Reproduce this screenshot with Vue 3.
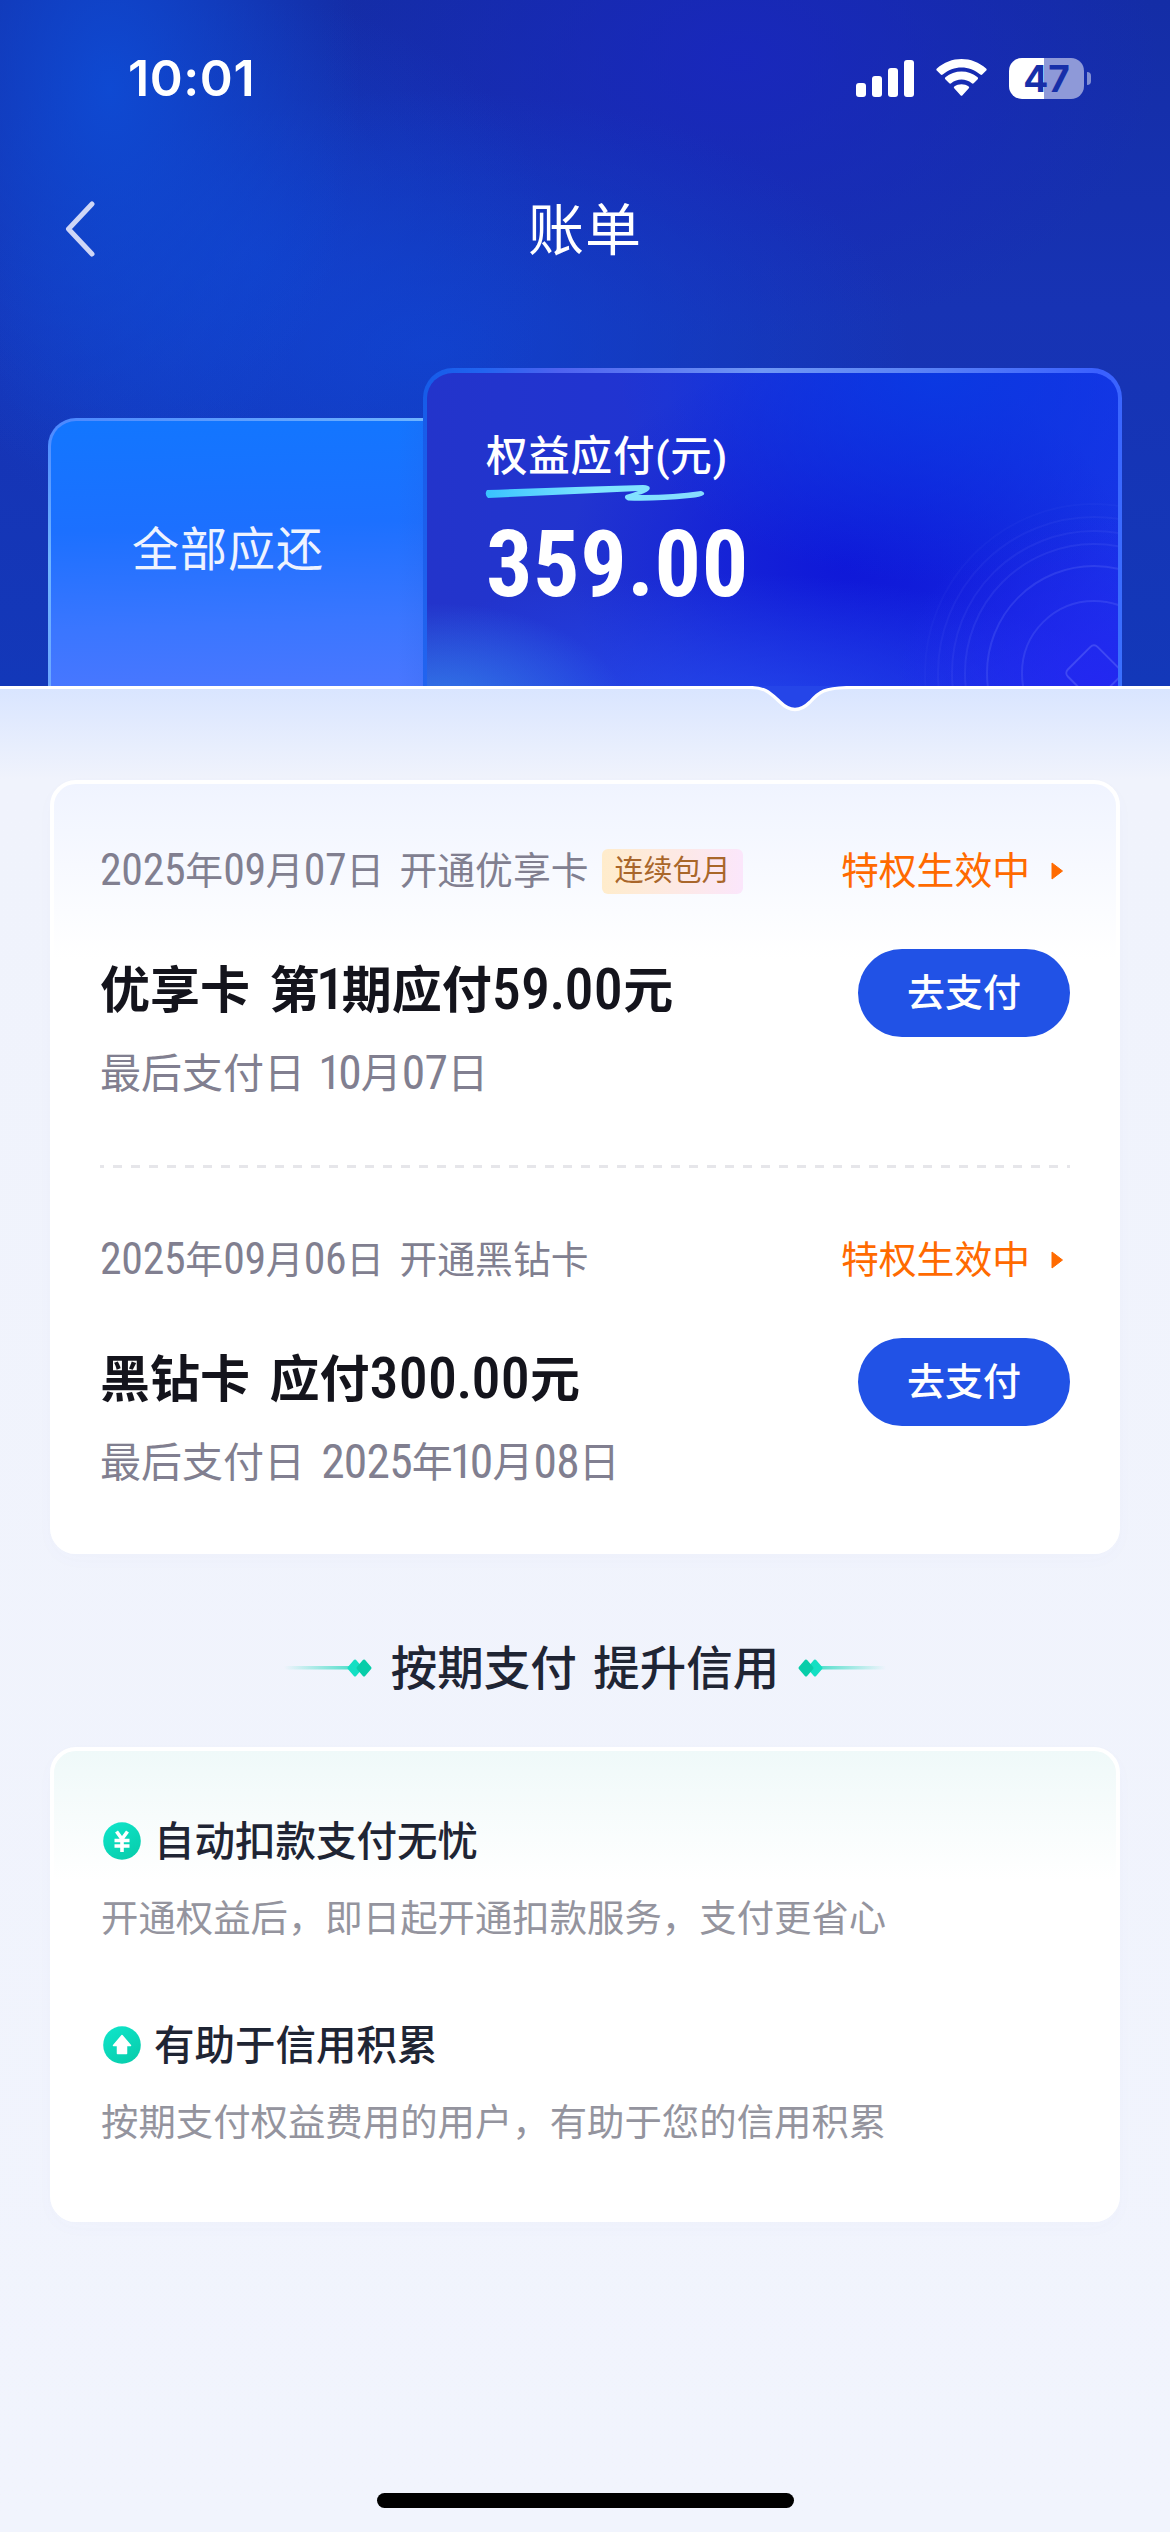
<script setup>
const bills = [
  {
    opened: '2025年09月07日 开通优享卡',
    tag: '连续包月',
    status: '特权生效中',
    title: '优享卡 第1期应付59.00元',
    due: '最后支付日 10月07日',
  },
  {
    opened: '2025年09月06日 开通黑钻卡',
    tag: '',
    status: '特权生效中',
    title: '黑钻卡 应付300.00元',
    due: '最后支付日 2025年10月08日',
  },
]

const benefits = [
  { icon: 'yuan', title: '自动扣款支付无忧', desc: '开通权益后，即日起开通扣款服务，支付更省心' },
  { icon: 'up', title: '有助于信用积累', desc: '按期支付权益费用的用户，有助于您的信用积累' },
]

// Digits are set in a narrower face than the surrounding Chinese text;
// "1" and "." get tighter side bearings so the figures look proportional.
const split = (text) =>
  text
    .split(/(1|\.|[02-9]+)/)
    .filter(Boolean)
    .map((t) => ({ t, cls: { num: /^[\d.]+$/.test(t), one: t === '1', dot: t === '.' } }))
</script>

<template>
  <div class="page">
    <header class="header">
      <div class="status-bar">
        <span class="time">10:01</span>
        <div class="indicators">
          <svg class="signal" width="58" height="37" viewBox="0 0 58 37" fill="#fff">
            <rect x="0" y="23" width="10" height="14" rx="3" />
            <rect x="16" y="16" width="10" height="21" rx="3" />
            <rect x="32" y="8" width="10" height="29" rx="3" />
            <rect x="48" y="0" width="10" height="37" rx="3" />
          </svg>
          <svg class="wifi" width="51" height="38" viewBox="0 0 51 38" fill="#fff">
            <path d="M.8 11.6Q-.2 10.6.9 9.6C14.800-3.200 36.200-3.200 50.100 9.600Q51.200 10.600 50.200 11.600L46.200 15.600Q45.300 16.500 44.300 15.600C33.500 6.200 17.500 6.200 6.700 15.600Q5.700 16.500 4.800 15.600Z" />
            <path d="M9.300 20.200Q8.400 19.300 9.400 18.300C18.500 10.500 32.500 10.500 41.600 18.300Q42.600 19.300 41.700 20.200L37.700 24.200Q36.800 25.100 35.800 24.200C29.800 19.400 21.200 19.400 15.200 24.200Q14.200 25.100 13.300 24.200Z" />
            <path d="M18.200 29.200Q17.300 28.200 18.300 27.400C22.500 24.400 28.500 24.400 32.700 27.400Q33.700 28.200 32.800 29.200L26.500 36.200Q25.500 37.200 24.500 36.200Z" />
          </svg>
          <div class="battery">
            <div class="cell">47</div>
            <div class="nub"></div>
          </div>
        </div>
      </div>

      <nav class="nav">
        <svg class="back" width="32" height="56" viewBox="0 0 32 56" fill="none">
          <path d="M29 3L5.500 28L29 53" stroke="#cfd6f6" stroke-width="5" stroke-linecap="round" stroke-linejoin="round" />
        </svg>
        <h1>账单</h1>
      </nav>

      <div class="tabs">
        <div class="tab tab-all">全部应还</div>
        <div class="tab tab-rights">
          <svg class="rings" width="200" height="200" viewBox="0 0 200 200" fill="none" stroke="#7f8cff" stroke-width="2">
            <circle cx="176" cy="187" r="72" opacity=".2" />
            <circle cx="176" cy="187" r="107" opacity=".2" />
            <circle cx="176" cy="187" r="129" opacity=".13" />
            <circle cx="176" cy="187" r="142" opacity=".1" />
            <circle cx="176" cy="187" r="156" opacity=".08" />
            <circle cx="176" cy="187" r="169" opacity=".05" />
            <rect x="155" y="166" width="42" height="42" rx="5" transform="rotate(45 176 187)" opacity=".32" />
          </svg>
          <div class="label">权益应付(元)</div>
          <svg class="underline" width="220" height="18" viewBox="0 0 220 18">
            <defs>
              <linearGradient id="stroke" x1="0" x2="1" y1="0" y2="0">
                <stop offset="0" stop-color="#38c3ff" />
                <stop offset=".5" stop-color="#80e6ff" />
                <stop offset="1" stop-color="#86dcff" />
              </linearGradient>
            </defs>
            <path d="M2 6Q80 3 158 1Q167 1.500 164 6Q160 9.500 153 11Q185 11.500 216 7Q220 8 219 10.500Q216 13 205 14Q170 17.500 143 16.500Q138 14 141 11Q148 9 153 7Q80 10.500 3 14Q-1 10 2 6Z" fill="url(#stroke)" />
          </svg>
          <div class="amount">359.00</div>
        </div>
      </div>
    </header>

    <main class="panel">
      <svg class="notch" width="104" height="28" viewBox="0 0 104 28">
        <path d="M0 -1V1.500C18 1.500 22 8 31 16Q46 31 61 16C70 6 74 1.500 104 1.500V-1Z" fill="#2545e8" />
        <path d="M0 1.500C18 1.500 22 8 31 16Q46 31 61 16C70 6 74 1.500 104 1.500" fill="none" stroke="#fff" stroke-width="3.200" />
      </svg>

      <section class="card bills">
        <article v-for="bill in bills" :key="bill.opened" class="bill">
          <div class="bill-top">
            <span class="opened"><span v-for="(s, i) in split(bill.opened)" :key="i" :class="s.cls">{{ s.t }}</span></span>
            <span v-if="bill.tag" class="tag">{{ bill.tag }}</span>
            <span class="state">
              {{ bill.status }}
              <svg width="12" height="18" viewBox="0 0 12 18"><path d="M1 1L11.500 9L1 17Z" fill="#ff6a00" stroke="#ff6a00" stroke-linejoin="round" /></svg>
            </span>
          </div>
          <div class="bill-body">
            <div class="info">
              <div class="title"><span v-for="(s, i) in split(bill.title)" :key="i" :class="s.cls">{{ s.t }}</span></div>
              <div class="due"><span v-for="(s, i) in split(bill.due)" :key="i" :class="s.cls">{{ s.t }}</span></div>
            </div>
            <button class="pay">去支付</button>
          </div>
        </article>
      </section>

      <div class="heading">
        <svg width="88" height="20" viewBox="0 0 88 20">
          <defs>
            <linearGradient id="fade" x1="0" x2="1" y1="0" y2="0">
              <stop offset="0" stop-color="#12d6b8" stop-opacity="0" />
              <stop offset="1" stop-color="#12d6b8" stop-opacity=".7" />
            </linearGradient>
          </defs>
          <rect x="0" y="8" width="66" height="3.500" fill="url(#fade)" />
          <path d="M71 3L77 10L71 17L65 10Z" fill="#14dfc3" stroke="#14dfc3" stroke-width="3" stroke-linejoin="round" />
          <path d="M80 3L86 10L80 17L74 10Z" fill="#08cda9" stroke="#08cda9" stroke-width="3" stroke-linejoin="round" />
        </svg>
        <h2>按期支付 提升信用</h2>
        <svg class="flip" width="88" height="20" viewBox="0 0 88 20">
          <rect x="0" y="8" width="66" height="3.500" fill="url(#fade)" />
          <path d="M71 3L77 10L71 17L65 10Z" fill="#14dfc3" stroke="#14dfc3" stroke-width="3" stroke-linejoin="round" />
          <path d="M80 3L86 10L80 17L74 10Z" fill="#08cda9" stroke="#08cda9" stroke-width="3" stroke-linejoin="round" />
        </svg>
      </div>

      <section class="card benefits">
        <article v-for="item in benefits" :key="item.icon" class="benefit">
          <div class="benefit-title">
            <svg width="38" height="38" viewBox="0 0 38 38">
              <defs>
                <linearGradient id="mint" x1="0" x2=".6" y1="0" y2="1">
                  <stop offset="0" stop-color="#0fe6cb" />
                  <stop offset="1" stop-color="#08cfae" />
                </linearGradient>
              </defs>
              <circle cx="19" cy="19" r="18.800" fill="url(#mint)" />
              <path v-if="item.icon === 'yuan'" d="M13.500 9.500L19 17L24.500 9.500M11.500 18.500H26.500M11.500 24H26.500M19 17V30" fill="none" stroke="#fff" stroke-width="3.600" />
              <path v-else d="M19 9.500L27.500 19.500H23.500V27.500H14.500V19.500H10.500Z" fill="#fff" stroke="#fff" stroke-width="1.500" stroke-linejoin="round" />
            </svg>
            <span>{{ item.title }}</span>
          </div>
          <p>{{ item.desc }}</p>
        </article>
      </section>

      <div class="home-indicator"></div>
    </main>
  </div>
</template>

<style>
body {
  background: #f1f4fd;
}
</style>

<style scoped>
.page {
  display: flex;
  flex-direction: column;
  width: 1170px;
  height: 2532px;
  overflow: hidden;
  background: #f1f4fd;
  font-family: Roboto, 'Noto Sans CJK SC', sans-serif;
}

h1,
h2,
p {
  margin: 0;
  font-weight: 400;
}

.header {
  display: flex;
  flex-direction: column;
  flex: none;
  height: 686px;
  background:
    radial-gradient(ellipse 250px 400px at 110px 90px, rgba(14, 76, 214, 0.9), rgba(14, 76, 214, 0) 100%),
    radial-gradient(ellipse 300px 260px at 260px 260px, rgba(16, 70, 212, 0.55), rgba(16, 70, 212, 0) 100%),
    radial-gradient(ellipse 480px 260px at 430px 350px, rgba(16, 68, 210, 0.8), rgba(16, 68, 210, 0) 100%),
    radial-gradient(ellipse 420px 280px at 740px 60px, rgba(26, 38, 192, 0.8), rgba(26, 38, 192, 0) 100%),
    linear-gradient(180deg, #142da6 0, #1733b4 45%, #1338b9 100%);
}

.status-bar {
  display: flex;
  justify-content: space-between;
  align-items: center;
  height: 156px;
  padding: 0 79px 0 128px;
  color: #fff;
}

.time {
  font: 600 50px/60px Inter, sans-serif;
  letter-spacing: 0.6px;
}

.indicators {
  display: flex;
  align-items: center;
}

.wifi {
  margin-left: 22px;
}

.battery {
  display: flex;
  align-items: center;
  gap: 3px;
  margin-left: 22px;
}

.cell {
  width: 75px;
  height: 41px;
  border-radius: 13px;
  background: linear-gradient(90deg, #fff 35px, #8e99d8 35px);
  color: #172fa9;
  font: 700 37px/41px Inter, sans-serif;
  text-align: center;
}

.nub {
  width: 4px;
  height: 13px;
  border-radius: 0 6px 6px 0;
  background: #8290d3;
}

.nav {
  display: grid;
  grid-template-columns: 1fr auto 1fr;
  align-items: center;
  height: 146px;
  padding: 0 63px;
  color: #fff;
}

.nav h1 {
  padding-top: 4px;
  font-size: 56px;
  line-height: 80px;
  letter-spacing: 1px;
}

.tabs {
  display: flex;
  align-items: flex-end;
  margin: auto 48px 0;
}

.tab {
  box-sizing: border-box;
  color: #fff;
}

.tab-all {
  width: 400px;
  height: 268px;
  margin-right: -25px;
  padding: 96px 0 0 81px;
  border: 3px solid transparent;
  border-bottom: 0;
  border-radius: 28px 0 0 0;
  background:
    linear-gradient(90deg, rgba(40, 90, 220, 0) 88%, rgba(40, 90, 220, 0.25) 100%) padding-box,
    linear-gradient(178deg, #1276ff 0, #1c70ff 40%, #3a76ff 75%, #4a77ff 100%) padding-box,
    linear-gradient(160deg, #4a86ff 0, #70b6ff 35%, #6aa3ff 70%, #8aa8ff 100%) border-box;
  color: #eef3ff;
  font-size: 47px;
  line-height: 66px;
  letter-spacing: 1px;
}

.tab-rights {
  position: relative;
  display: flex;
  flex-direction: column;
  align-items: flex-start;
  width: 699px;
  height: 318px;
  padding: 56px 0 0 59px;
  border: 4px solid transparent;
  border-top-width: 5px;
  border-bottom: 0;
  border-radius: 30px 30px 0 0;
  overflow: hidden;
  background:
    radial-gradient(ellipse 190px 110px at 10px 340px, rgba(54, 132, 236, 0.9), rgba(54, 132, 236, 0)) padding-box,
    radial-gradient(ellipse 200px 170px at 670px 310px, rgba(36, 38, 242, 0.9), rgba(36, 38, 242, 0)) padding-box,
    radial-gradient(ellipse 420px 150px at 300px 350px, rgba(38, 76, 240, 0.85), rgba(38, 76, 240, 0)) padding-box,
    radial-gradient(ellipse 320px 210px at 510px 0, rgba(10, 58, 226, 0.95), rgba(10, 58, 226, 0)) padding-box,
    radial-gradient(ellipse 280px 210px at 420px 190px, rgba(14, 22, 216, 0.9), rgba(14, 22, 216, 0)) padding-box,
    linear-gradient(90deg, #2334cb 0, #2034d2 35%, #1628de 70%, #1834e6 100%) padding-box,
    linear-gradient(100deg, #155be8 0, #2264f0 8%, #4e62f0 18%, #6f97f5 45%, #5c84f6 65%, #3a60ff 90%, #3a70ff 100%) border-box;
}

.rings {
  position: absolute;
  right: 0;
  bottom: 0;
}

.label {
  font-size: 41.500px;
  font-weight: 500;
  line-height: 56px;
  letter-spacing: 0.8px;
}

.underline {
  margin: -1px 0 0 -1px;
}

.amount {
  margin-top: 13px;
  font-size: 92px;
  font-weight: 700;
  font-stretch: 75%;
  line-height: 100px;
  letter-spacing: 0.6px;
}

.num {
  font-size: 1.160em;
  font-stretch: 75%;
  line-height: 1;
  letter-spacing: -0.3px;
  vertical-align: -1px;
}

.one {
  margin: 0 -0.06em;
}

.dot {
  margin: 0 -0.02em;
}

.panel {
  position: relative;
  display: flex;
  flex-direction: column;
  flex: 1;
  padding: 91px 50px 0;
  border-top: 3px solid #fff;
  background: linear-gradient(180deg, #d9e5ff 0, #f0f3fc 90px, #f1f4fd 100%);
}

.notch {
  position: absolute;
  top: -3px;
  left: 749px;
}

.card {
  box-sizing: border-box;
  border: 4px solid #fff;
  border-radius: 26px;
  box-shadow: 0 6px 20px rgba(90, 100, 180, 0.02);
}

.bills {
  height: 774px;
  padding: 64px 46px 0;
  background: linear-gradient(180deg, #f0f4ff 0, #fff 175px);
}

.bill + .bill {
  margin-top: 68px;
  padding-top: 72px;
  background: repeating-linear-gradient(90deg, #e6e6ea 0 4px, transparent 4px 13px, #e6e6ea 13px 18px) 0 0 / 100% 3px no-repeat;
}

.bill-top {
  display: flex;
  align-items: center;
  height: 46px;
}

.opened {
  color: #817f90;
  font-size: 37.800px;
  line-height: 46px;
  word-spacing: 6px;
  white-space: pre;
}

.tag {
  margin-left: 14px;
  padding: 0 12px;
  border-radius: 6px;
  background: linear-gradient(90deg, #ffeccb, #fbe6fb);
  color: #a9662a;
  font-size: 29px;
  line-height: 45px;
}

.state {
  display: flex;
  align-items: center;
  gap: 21px;
  margin-left: auto;
  padding-right: 7px;
  color: #ff6a00;
  font-size: 37.800px;
  line-height: 46px;
}

.bill-body {
  display: flex;
  justify-content: space-between;
  align-items: flex-start;
  margin-top: 55px;
}

.info {
  padding-top: 11px;
}

.title {
  height: 60px;
  color: #14141c;
  font-size: 50px;
  font-weight: 700;
  line-height: 60px;
  word-spacing: 7px;
  white-space: pre;
}

.title .num {
  font-weight: 500;
  letter-spacing: 0.3px;
}

.due {
  height: 48px;
  margin-top: 30px;
  margin-bottom: -1px;
  color: #817f90;
  font-size: 41px;
  line-height: 48px;
  word-spacing: 6px;
  white-space: pre;
}

.due .num {
  letter-spacing: -0.8px;
}

.pay {
  width: 212px;
  height: 88px;
  padding: 0 0 6px;
  border: 0;
  border-radius: 44px;
  background: #2152e6;
  color: #fff;
  font: 500 38px/82px 'Noto Sans CJK SC', sans-serif;
}

.heading {
  display: flex;
  justify-content: center;
  align-items: center;
  gap: 19px;
  height: 60px;
  margin: 84px 0 49px;
}

.heading h2 {
  padding-top: 2px;
  color: #1f2534;
  font-size: 46.500px;
  font-weight: 500;
  line-height: 60px;
  word-spacing: 5px;
}

.flip {
  transform: scaleX(-1);
}

.benefits {
  height: 475px;
  padding: 65px 48px 0 49px;
  background: linear-gradient(180deg, #eff9f9 0, #fff 130px);
}

.benefit + .benefit {
  margin-top: 77px;
}

.benefit-title {
  display: flex;
  align-items: center;
  gap: 13px;
  height: 50px;
  color: #1f2534;
  font-size: 40.500px;
  font-weight: 500;
  line-height: 50px;
}

.benefit-title span {
  padding-top: 2px;
}

.benefit p {
  height: 50px;
  margin: 28px 0 -1px -2px;
  color: #94949e;
  font-size: 37.400px;
  line-height: 50px;
}

.home-indicator {
  align-self: center;
  width: 417px;
  height: 15px;
  margin: auto 0 24px;
  border-radius: 8px;
  background: #000;
}
</style>
